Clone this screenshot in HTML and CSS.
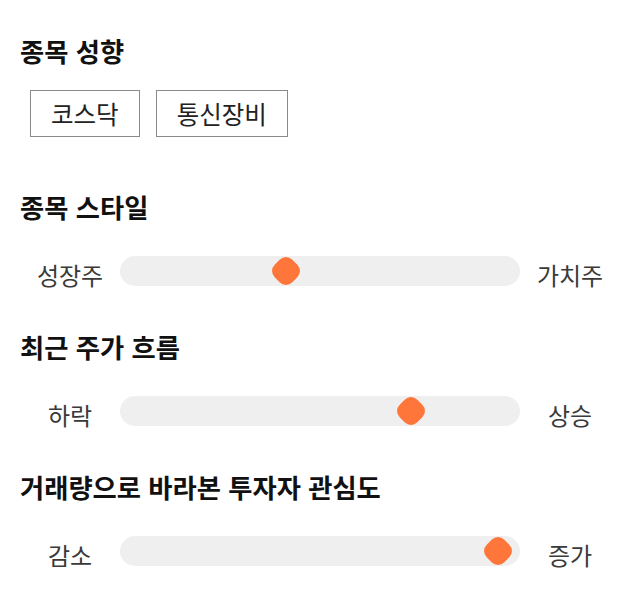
FILE: index.html
```html
<!DOCTYPE html>
<html lang="ko">
<head>
    <meta charset="UTF-8">
    <meta name="viewport" content="width=device-width, initial-scale=1.0">
    <title>종목 성향</title>
    <link rel="stylesheet" href="styles.css">
</head>
<body>
    <div class="section">
        <h2 class="section-title">종목 성향</h2>
        <div class="tag-list">
            <span class="tag">코스닥</span>
            <span class="tag">통신장비</span>
        </div>
    </div>

    <div class="section">
        <h2 class="section-title">종목 스타일</h2>
        <div class="slider-row">
            <span class="slider-label">성장주</span>
            <div class="slider-track">
                <span class="slider-thumb" style="left: 41.4%"></span>
            </div>
            <span class="slider-label">가치주</span>
        </div>
    </div>

    <div class="section">
        <h2 class="section-title">최근 주가 흐름</h2>
        <div class="slider-row">
            <span class="slider-label">하락</span>
            <div class="slider-track">
                <span class="slider-thumb" style="left: 72.8%"></span>
            </div>
            <span class="slider-label">상승</span>
        </div>
    </div>

    <div class="section">
        <h2 class="section-title">거래량으로 바라본 투자자 관심도</h2>
        <div class="slider-row">
            <span class="slider-label">감소</span>
            <div class="slider-track">
                <span class="slider-thumb" style="left: 94.4%"></span>
            </div>
            <span class="slider-label">증가</span>
        </div>
    </div>
</body>
</html>
```

FILE: styles.css
```css
body {
    font-family: "Noto Sans CJK KR", "Noto Sans", sans-serif;
    margin: 0;
    padding: 36px 0 0;
    background-color: white;
    color: #111;
}
.section {
    margin-bottom: 46px;
}
.section-title {
    margin: 0;
    padding-left: 20px;
    font-size: 26.3px;
    line-height: 30px;
    font-weight: bold;
    color: #111;
}
.tag-list {
    display: flex;
    gap: 16px;
    margin-top: 24px;
    padding-left: 30px;
}
.tag {
    display: flex;
    align-items: center;
    height: 47px;
    box-sizing: border-box;
    padding: 0 20px;
    border: 1px solid #8a8a8a;
    font-size: 24.5px;
    color: #222;
}
.section:first-child {
    margin-bottom: 55px;
}
.slider-row {
    display: flex;
    align-items: center;
    height: 30px;
    margin-top: 34px;
    padding: 0 20px;
}
.slider-label {
    width: 100px;
    padding-top: 8px;
    text-align: center;
    font-size: 24px;
    line-height: 30px;
    color: #3a3a3a;
}
.slider-track {
    position: relative;
    flex: 1;
    height: 30px;
    border-radius: 15px;
    background-color: #efefef;
}
.slider-thumb {
    position: absolute;
    top: 50%;
    width: 25px;
    height: 25px;
    border-radius: 9px;
    background-color: #ff763a;
    transform: translate(-50%, -50%) rotate(45deg);
}
```
